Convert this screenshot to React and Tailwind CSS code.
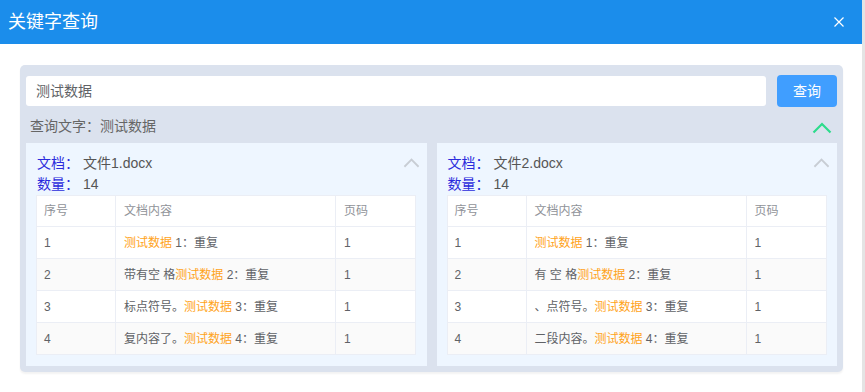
const FONT = { fontFamily: '"Liberation Sans", "Noto Sans CJK SC", sans-serif' };

const docs = [
  {
    name: '文件1.docx',
    count: 14,
    rows: [
      { pre: '', kw: '测试数据', post: ' 1：重复' },
      { pre: '带有空 格', kw: '测试数据', post: ' 2：重复' },
      { pre: '标点符号。', kw: '测试数据', post: ' 3：重复' },
      { pre: '复内容了。', kw: '测试数据', post: ' 4：重复' },
    ],
  },
  {
    name: '文件2.docx',
    count: 14,
    rows: [
      { pre: '', kw: '测试数据', post: ' 1：重复' },
      { pre: '有 空 格', kw: '测试数据', post: ' 2：重复' },
      { pre: '、点符号。', kw: '测试数据', post: ' 3：重复' },
      { pre: '二段内容。', kw: '测试数据', post: ' 4：重复' },
    ],
  },
];

function ChevronUp({ className }) {
  return (
    <svg viewBox="0 0 20 12" className={className} fill="none" stroke="currentColor" strokeWidth="2.2">
      <path d="M1.5 10.5 L10 2 L18.5 10.5" />
    </svg>
  );
}

function DocCard({ doc }) {
  return (
    <div className="relative flex-1 bg-[#eef6ff] px-[10px] pt-[10px] pb-[11px]">
      <ChevronUp className="absolute right-[7px] top-[15px] w-[17px] h-[10px] text-[#c8cdd4]" />
      <div className="flex items-center h-[21px] text-[14px] pl-px">
        <span className="text-[#2b2bdc] w-[46px]">文档：</span>
        <span className="text-[#555]">{doc.name}</span>
      </div>
      <div className="flex items-center h-[21px] text-[14px] pl-px">
        <span className="text-[#2b2bdc] w-[46px]">数量：</span>
        <span className="text-[#555]">{doc.count}</span>
      </div>
      <table className="w-[380px] border-collapse text-[12px] text-[#606266] table-fixed">
        <colgroup>
          <col className="w-[79px]" />
          <col className="w-[220px]" />
          <col />
        </colgroup>
        <thead>
          <tr className="bg-white h-[31px]">
            <th className="border border-[#ebeef5] text-left font-normal text-[#909399] pl-[7px]">序号</th>
            <th className="border border-[#ebeef5] text-left font-normal text-[#909399] pl-[8px]">文档内容</th>
            <th className="border border-[#ebeef5] text-left font-normal text-[#909399] pl-[8px]">页码</th>
          </tr>
        </thead>
        <tbody>
          {doc.rows.map((r, i) => (
            <tr key={i} className={`h-[32px] ${i % 2 === 1 ? 'bg-[#fafafa]' : 'bg-white'}`}>
              <td className="border border-[#ebeef5] pl-[7px]">{i + 1}</td>
              <td className="border border-[#ebeef5] pl-[8px] whitespace-nowrap">
                {r.pre}
                <span className="text-[#ffa31a]">{r.kw}</span>
                {r.post}
              </td>
              <td className="border border-[#ebeef5] pl-[8px]">1</td>
            </tr>
          ))}
        </tbody>
      </table>
    </div>
  );
}

export default function App() {
  return (
    <div className="w-[865px] h-[392px] bg-white overflow-hidden flex flex-col border-r-[3px] border-[#e4e4e4]" style={FONT}>
      <div className="h-[44px] shrink-0 bg-[#1b8deb] flex items-center justify-between pl-[8px] pr-[18px]">
        <span className="text-white text-[18px]">关键字查询</span>
        <svg viewBox="0 0 10 10" className="w-[10px] h-[10px] text-white" stroke="currentColor" strokeWidth="1.2">
          <path d="M0.5 0.5 L9.5 9.5 M9.5 0.5 L0.5 9.5" />
        </svg>
      </div>
      <div className="pt-[21px] pl-[20px]">
        <div className="w-[823px] bg-[#dbe2ee] rounded-[5px] px-[6px] pt-[10px] pb-[6px] shadow-[0_2px_2px_rgba(0,0,0,0.05)]">
          <div className="flex items-center gap-[11px]">
            <div className="w-[740px] h-[30px] bg-white rounded-[3px] flex items-center pl-[10px] text-[14px] text-[#606266]">
              测试数据
            </div>
            <button className="w-[60px] h-[32px] bg-[#409eff] rounded-[4px] text-white text-[14px]">查询</button>
          </div>
          <div className="flex items-center justify-between h-[36px]">
            <span className="text-[14px] text-[#666] pl-[4px] pt-[3px]">查询文字：测试数据</span>
            <ChevronUp className="w-[20px] h-[12px] text-[#2ddc8c] mr-[5px] mt-[6px]" />
          </div>
          <div className="flex gap-[10px]">
            {docs.map((d) => (
              <DocCard key={d.name} doc={d} />
            ))}
          </div>
        </div>
      </div>
    </div>
  );
}
